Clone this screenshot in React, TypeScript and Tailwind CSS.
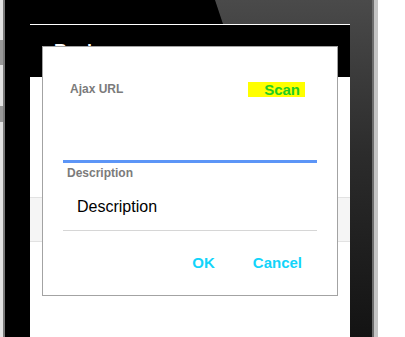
export default function App() {
  return (
    <div className="relative flex h-[337px] w-[405px] overflow-hidden bg-white font-['Liberation_Sans',Arial,sans-serif]">
      {/* left phone edge */}
      <div className="relative w-[3px] bg-[#e4e4e4]">
        <div className="absolute left-0 top-[40px] h-[25px] w-[3px] bg-[#9a9a9a]" />
        <div className="absolute left-0 top-[106px] h-[16px] w-[3px] bg-[#9a9a9a]" />
      </div>
      <div className="w-[2px] bg-[#7a7a7a]" />

      {/* phone body */}
      <div className="relative w-[367px] bg-black pl-[25px] pr-[22px] pt-[24px]">
        <svg className="absolute inset-0" width="367" height="337" viewBox="0 0 367 337">
          <defs>
            <linearGradient id="glare" x1="0" y1="0" x2="0" y2="1">
              <stop offset="0" stopColor="#4a4a4a" />
              <stop offset="0.45" stopColor="#2c2c2c" />
              <stop offset="1" stopColor="#131313" />
            </linearGradient>
          </defs>
          <polygon points="210,0 367,0 367,337 345,337 345,24 218,24" fill="url(#glare)" />
        </svg>

        <div className="relative flex h-full w-[320px] flex-col border-t border-white">
          <div className="h-[52px] bg-black pl-[13px] pt-[16px] text-[18px] font-bold leading-[20px] text-white">
            ‹ Back
          </div>
          <div className="flex-1 bg-white">
            <div className="mt-[120px] h-[45px] border-y border-[#e2e2e2] bg-[#f5f5f5]" />
          </div>
        </div>
      </div>

      {/* right phone edge */}
      <div className="w-[2px] bg-[#6e6e6e]" />
      <div className="w-[4px] bg-[#c4c4c4]" />
      <div className="flex-1 bg-white" />

      {/* dialog */}
      <div className="absolute left-[42px] top-[46px] flex h-[250px] w-[296px] flex-col border border-[#a3a3a3] bg-white pl-[20px] pt-[35px]">
        <div className="flex w-[254px] items-center justify-between pr-[12px]">
          <span className="pl-[7px] text-[12px] font-bold leading-[15px] text-[#7b7b7b]">Ajax URL</span>
          <span className="flex h-[15px] w-[57px] items-center justify-end bg-[#ffff00] pr-[5px] text-[15px] font-bold leading-[15px] text-[#22cc22]">
            Scan
          </span>
        </div>

        <div className="mt-[63px] h-[3px] w-[254px] bg-[#5c95f7]" />
        <div className="mt-[3px] pl-[4px] text-[12px] font-bold leading-[14px] text-[#7b7b7b]">Description</div>
        <div className="mt-[18px] pl-[14px] text-[16px] leading-[18px] text-black">Description</div>
        <div className="mt-[14px] h-px w-[254px] bg-[#d6d6d6]" />

        <div className="mt-[23px] flex w-[254px] justify-end gap-[38px] pr-[15px] text-[15px] font-bold leading-[18px] text-[#12d4fa]">
          <span>OK</span>
          <span>Cancel</span>
        </div>
      </div>
    </div>
  );
}
